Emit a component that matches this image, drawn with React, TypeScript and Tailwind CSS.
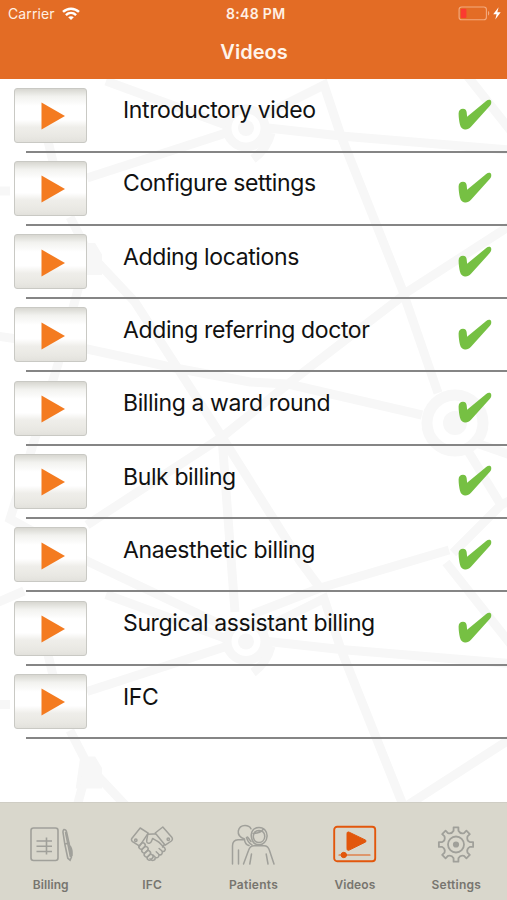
import type { ReactNode } from "react"
import clsx from "clsx"

const videos = [
  { title: "Introductory video", watched: true },
  { title: "Configure settings", watched: true },
  { title: "Adding locations", watched: true },
  { title: "Adding referring doctor", watched: true },
  { title: "Billing a ward round", watched: true },
  { title: "Bulk billing", watched: true },
  { title: "Anaesthetic billing", watched: true },
  { title: "Surgical assistant billing", watched: true },
  { title: "IFC", watched: false },
]

function StatusBar() {
  return (
    <div className="grid h-[27px] grid-cols-3 items-center pl-2 pr-[5.5px] text-[14px] leading-[27px] text-[#fff0e4]">
      <div className="flex items-center gap-[7px]">
        <span className="tracking-[0.1px]">Carrier</span>
        <svg width="18" height="13" viewBox="0 0 18 13" fill="none" stroke="#fff" strokeWidth="2.5">
          <path d="M1 4.9C5.6.6 12.4.6 17 4.9" />
          <path d="M3.9 8.1c3-2.7 7.2-2.7 10.2 0" />
          <path d="M9 12.9 6.2 10.2c1.6-1.3 4-1.3 5.6 0z" fill="#fff" stroke="none" />
        </svg>
      </div>
      <span className="pl-[2px] text-center text-[14px] font-semibold tracking-[0.3px] whitespace-nowrap">8:48 PM</span>
      <svg className="justify-self-end" width="44" height="15" viewBox="0 0 44 15">
        <rect x="1.1" y="1" width="27.3" height="12.8" rx="2.6" fill="none" stroke="#f3ab80" strokeWidth="1.1" />
        <path d="M30 5v4.6c1.7-.7 1.7-3.9 0-4.6z" fill="#f3ab80" />
        <rect x="2.8" y="2.7" width="5.6" height="9.4" rx="1" fill="#fb3a30" />
        <path d="M40.6 1.2 35.2 8.3h3.4l-1.3 5.2 5.4-7.2h-3.4z" fill="#fff" />
      </svg>
    </div>
  )
}

// faint network drawing, tiled vertically behind the list
function NetworkTile() {
  return (
    <>
      <circle cx="246" cy="49" r="19" strokeWidth="9" />
      <circle cx="246" cy="49" r="8" fill="#f7f7f7" stroke="none" />
      <path d="M106 2 226 46M-4 112h14M87 99 226 54M264 36 324 6l17 51M268 49l73 8 170 14M341 57l63 158 107-69M271 54q-4 16-18 26" />
      <path d="M446-30 511 52M404 216 288 305M404 216l34 98M288 305l134 31M288 305 222 358 87 446M288 305 250 303 175 289 87 270-4 257" />
      <path d="M48 62l5 21M70 138l18 35 47 50L222 358l78 124 20 27M88 173 58 285 10 440l77 42 139 66M222 358l13 175" />
      <path d="M82 166h12l6 10v18H78z" fill="#f7f7f7" strokeWidth="4" />
      <circle cx="455" cy="344" r="28" strokeWidth="11" />
      <circle cx="455" cy="344" r="12" fill="#f7f7f7" stroke="none" />
      <path d="M476 364l35 12M468 372l33 54-48 48M501 426l10-5M320 509l129-38M320 509l-67 26" />
      <path d="M-4 524l28-12" />
    </>
  )
}

function NetworkBackground() {
  return (
    <svg
      className="absolute inset-0"
      width="507"
      height="723"
      viewBox="0 0 507 723"
      fill="none"
      stroke="#f7f7f7"
      strokeWidth="9"
      aria-hidden="true"
    >
      <NetworkTile />
      <g transform="translate(0 513.5)">
        <NetworkTile />
      </g>
    </svg>
  )
}

function PlayThumb() {
  return (
    <div className="mt-[8.5px] flex h-[55px] w-[73.5px] shrink-0 items-center justify-center rounded-[3px] border-[1.5px] border-[#c9c9c4] bg-[linear-gradient(#d8d7d1_0%,#f2f2ef_14%,#ffffff_32%,#ffffff_58%,#efeeea_72%,#e9e8e3_90%,#e2e1dc_100%)] pt-[2px] pl-[5px]">
      <svg width="24" height="28" viewBox="0 0 24 28">
        <path d="M.5.5 24 14 .5 27.5z" fill="#f47b20" />
      </svg>
    </div>
  )
}

function Tick() {
  return (
    <svg className="mt-[20px] ml-auto mr-[15px]" width="34" height="32" viewBox="0 0 34 32">
      <path
        d="M.6 14.5C.6 11.6 2.4 9.8 5 9.8c2.4 0 3.5 1.4 3.7 3.8l.4 4.2L28.2 2c2-1.6 4.6-1.6 5 .4.3 1.7-.2 3.2-1.5 4.7L13 27.8c-2 2.1-3.9 3-6.2 2.7-2.6-.3-4-2-4.8-4.8C1.2 22.7.6 18.2.6 14.5z"
        fill="#76c043"
      />
    </svg>
  )
}

function VideoRow({ title, watched }: { title: string; watched: boolean }) {
  return (
    <li className="relative flex h-[73.3px] items-start pl-[13.5px]">
      <PlayThumb />
      <span className="ml-[36px] mt-[15.2px] text-[23px] leading-[32px] tracking-[-0.38px] whitespace-nowrap text-[#111]">
        {title}
      </span>
      {watched && <Tick />}
      <div className="absolute right-0 bottom-[-0.3px] left-[25.5px] h-[2px] bg-[#858585]" />
    </li>
  )
}

function BillingIcon() {
  return (
    <svg width="44" height="44" viewBox="0 0 44 44" fill="none" stroke="#a0a09a" strokeWidth="1.6">
      <rect x="2" y="6" width="27" height="32.5" rx="2.5" />
      <path d="M7.5 19H23M7.5 24.3H23M7.5 29.5H23M17.5 15.5v17" />
      <path d="M35 7.5c1.4 0 2.2.8 2.6 2.6l2.4 11-4.2.9-1.7-11c-.3-1.8 0-3 .9-3.500zM35.8 22l3 14.2 2.3 2 1.4-3.2L40 21M40.600 23.500c1.900 1.800 2.700 5.800 2.300 10.500" />
      <path d="m36.5 10 5 25" />
    </svg>
  )
}

function HandshakeIcon() {
  return (
    <svg width="44" height="44" viewBox="0 0 44 44" fill="none" stroke="#a0a09a" strokeWidth="1.5" strokeLinejoin="round" strokeLinecap="round">
      <path d="m10.2 6 8 5.2-8.6 13L2.5 19.6c-1.2-1-1.2-2.3-.5-3.4z" />
      <path d="m32.800 5-7.600 6 10 12.200 6.200-4.200c1.200-1 1.200-2.300.6-3.400z" />
      <circle cx="5.8" cy="18.3" r="1.2" />
      <circle cx="38.3" cy="17.3" r="1.2" />
      <path d="M18 12.3c3-.2 5-.2 7.4-.3M17.800 12.500c-.6 3-1.400 5.300-1 7.500.9 2.200 4 1.500 4.800-1l1-2.600c2 1.600 4.500 2 6.500 4l5.600 5.600c1.600 2-.6 4.400-2.600 3l-3-2.500M32 29.500c1.200 2.300-1.200 4.300-3.200 2.800l-2.600-2.500M28.800 32.500c.7 2.300-1.500 4-3.400 2.800l-2.400-2.200M25.200 35.500c.3 2.500-2.300 3.700-4.200 2.200l-1-1" />
      <rect x="8.5" y="21.8" width="7" height="4.6" rx="2.3" transform="rotate(-45 12 24)" />
      <rect x="11.3" y="25.3" width="7" height="4.6" rx="2.3" transform="rotate(-45 15 27.5)" />
      <rect x="14" y="29.5" width="7" height="4.6" rx="2.3" transform="rotate(-45 17.5 32)" />
      <rect x="17" y="33.2" width="6.4" height="4.4" rx="2.2" transform="rotate(-45 20 35.4)" />
      <path d="m34 23-1.5 2" />
    </svg>
  )
}

function PatientsIcon() {
  return (
    <svg width="44" height="44" viewBox="0 0 44 44" fill="none" stroke="#a0a09a" strokeWidth="1.5" strokeLinecap="round">
      <path d="M13.5 17C9 15.5 6.800 12.500 7.300 9 8 5.500 10.600 3.500 14 3.500c3 0 5 1.300 6 3.300" />
      <path d="M20.500 15.500c-1.300-5.500 2-10 7.500-10 5.200 0 8.600 4 8 9.300-.3 4.500-3.800 8-8 8-4 0-6.700-3-7.500-7.300z" />
      <path d="M22.500 16c-.8-4 1.300-7.500 5.500-7.600 3.800 0 6 3 5.700 6.600-.3 3.200-2.800 5.500-5.700 5.500s-4.900-1.700-5.500-4.500zM22 11.500c4.500 0 8.500-1.800 10.500-4.500M16.500 15l3.500 4.500" />
      <path d="M1.500 42V24c0-3.600 2-6 5.500-6.200h6.500c.4 3 2 5 4.500 5.700M15.500 15.500c1 3.500 3 6 5.500 7.300M7.500 42V28" />
      <path d="M12.500 42l5-13.500c1-3 2.800-4.700 5.500-4.700h10c2.700 0 4.500 1.500 5.500 4.700l4.500 13.500M18.800 42l1.700-10M37 42l-1.800-10" />
    </svg>
  )
}

function VideosIcon() {
  return (
    <svg width="44" height="44" viewBox="0 0 44 44" fill="none" stroke="#e2570c" strokeWidth="1.9" strokeLinecap="round">
      <rect x="1.2" y="4.7" width="41" height="34.5" rx="3" />
      <path d="M14 11.300c0-1.300 1-1.700 2.200-1.100l16 7.700c1.200.6 1.200 1.600 0 2.300l-16 7.900c-1.300.6-2.200 0-2.200-1.100z" fill="#e2570c" strokeWidth="1" />
      <path d="M6 33h31" strokeWidth="1.2" />
      <circle cx="10.8" cy="33" r="2.7" fill="#e2570c" strokeWidth="1" />
    </svg>
  )
}

const polar = (radius: number, deg: number) => {
  const a = (deg * Math.PI) / 180
  return `${(22 + radius * Math.cos(a)).toFixed(2)} ${(22.5 + radius * Math.sin(a)).toFixed(2)}`
}

// eight teeth joined by rounded valleys
const gearPath =
  Array.from({ length: 8 }, (_, i) => {
    const a = i * 45
    return `${i ? "L" : "M"}${polar(14, a - 10)}L${polar(17.3, a - 8)}L${polar(17.3, a + 8)}L${polar(14, a + 10)}Q${polar(11.2, a + 22.5)} ${polar(14, a + 35)}`
  }).join("") + "Z"

function SettingsIcon() {
  return (
    <svg width="44" height="44" viewBox="0 0 44 44" fill="none" stroke="#a0a09a" strokeWidth="1.8" strokeLinejoin="round">
      <path d={gearPath} />
      <circle cx="22" cy="22.5" r="8" />
      <circle cx="22" cy="22.5" r="2.2" fill="#a0a09a" />
    </svg>
  )
}

function Tab({ label, className, children }: { label: string; className?: string; children: ReactNode }) {
  return (
    <button className="flex flex-col items-center pt-[19px]">
      {children}
      <span className={clsx("mt-[10px] text-[12px] leading-[18px] font-semibold text-[#77756f]", className)}>
        {label}
      </span>
    </button>
  )
}

export default function App() {
  return (
    <div className="flex h-[900px] w-[507px] flex-col overflow-hidden bg-white font-['Inter',sans-serif]">
      <header className="h-[79px] shrink-0 bg-[#e36c25]">
        <StatusBar />
        <h1 className="pl-px text-center text-[20px] leading-[51px] font-semibold text-[#fff4ea]">Videos</h1>
      </header>

      <main className="relative flex-1 overflow-hidden">
        <NetworkBackground />
        <ul className="relative">
          {videos.map((video) => (
            <VideoRow key={video.title} {...video} />
          ))}
        </ul>
      </main>

      <nav className="grid h-[98px] shrink-0 grid-cols-5 border-t border-[#cfcdc4] bg-[#d9d7cc]">
        <Tab label="Billing" className="tracking-[0.1px]"><BillingIcon /></Tab>
        <Tab label="IFC" className="tracking-[0.1px]"><HandshakeIcon /></Tab>
        <Tab label="Patients" className="tracking-[0.25px]"><PatientsIcon /></Tab>
        <Tab label="Videos" className="tracking-[0.1px]"><VideosIcon /></Tab>
        <Tab label="Settings" className="tracking-[0.25px]"><SettingsIcon /></Tab>
      </nav>
    </div>
  )
}
